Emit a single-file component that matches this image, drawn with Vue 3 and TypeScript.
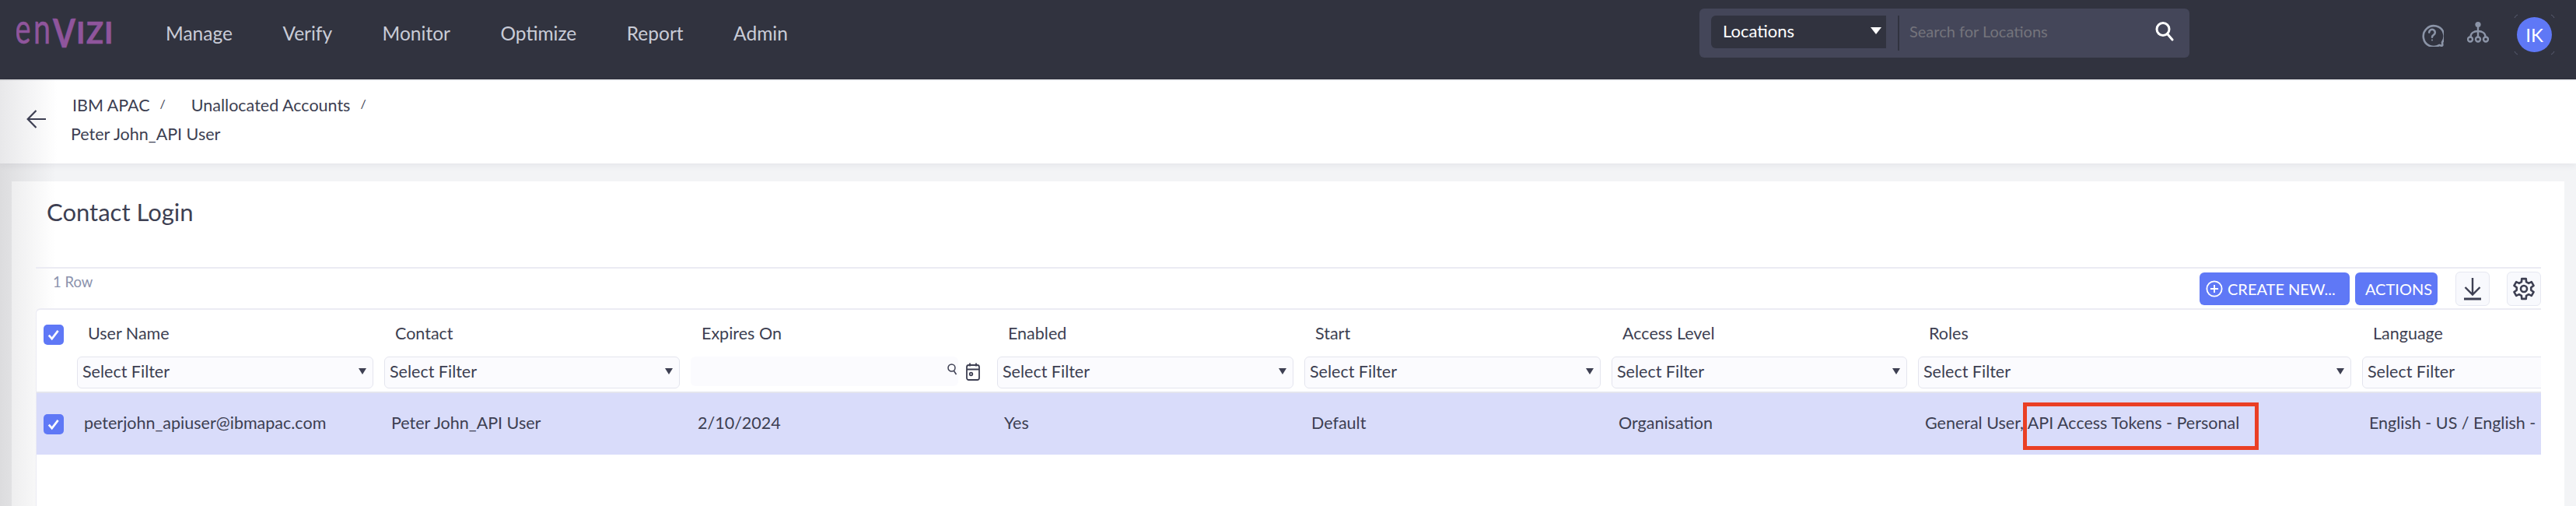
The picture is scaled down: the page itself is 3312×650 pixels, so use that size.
<script setup lang="ts">
const navItems = ['Manage', 'Verify', 'Monitor', 'Optimize', 'Report', 'Admin'];

interface Column {
  label: string;
  value: string;
  filter: 'select' | 'date';
}

const columns: Column[] = [
  { label: 'User Name', value: 'peterjohn_apiuser@ibmapac.com', filter: 'select' },
  { label: 'Contact', value: 'Peter John_API User', filter: 'select' },
  { label: 'Expires On', value: '2/10/2024', filter: 'date' },
  { label: 'Enabled', value: 'Yes', filter: 'select' },
  { label: 'Start', value: 'Default', filter: 'select' },
  { label: 'Access Level', value: 'Organisation', filter: 'select' },
  { label: 'Roles', value: 'General User, API Access Tokens - Personal', filter: 'select' },
  { label: 'Language', value: 'English - US / English - US', filter: 'select' },
];

// six lobed cog outline
function gearPoints(): string {
  const pts: string[] = [];
  const steps = [
    [13.2, -12], [13.2, 12], [9.4, 19], [9.4, 41],
  ];
  for (let i = 0; i < 6; i++) {
    for (const [r, a] of steps) {
      const ang = ((i * 60 + a - 90) * Math.PI) / 180;
      pts.push(`${(15 + r * Math.cos(ang)).toFixed(2)},${(15 + r * Math.sin(ang)).toFixed(2)}`);
    }
  }
  return pts.join(' ');
}
const gear = gearPoints();
</script>

<template>
  <div class="page">
    <header class="nav">
      <svg class="logo" width="192" height="86" viewBox="0 0 192 86" fill="#8f559c" stroke="#8f559c" stroke-width=".6">
        <text x="-1.500" y="56" font-size="55" textLength="20" lengthAdjust="spacingAndGlyphs">e</text>
        <text x="22" y="56" font-size="55" textLength="22" lengthAdjust="spacingAndGlyphs">n</text>
        <text x="47" y="61" font-size="52" font-weight="700" textLength="29" lengthAdjust="spacingAndGlyphs">V</text>
        <text x="77" y="56" font-size="39" font-weight="700">I</text>
        <text x="90" y="56" font-size="39" font-weight="700" textLength="22" lengthAdjust="spacingAndGlyphs">Z</text>
        <text x="113" y="56" font-size="39" font-weight="700">I</text>
      </svg>
      <nav class="menu">
        <a v-for="item in navItems" :key="item">{{ item }}</a>
      </nav>
      <div class="search">
        <div class="search-select">
          <span>Locations</span>
          <i class="caret"></i>
        </div>
        <div class="search-input">
          <span>Search for Locations</span>
          <svg width="26" height="26" viewBox="0 0 26 26" fill="none" stroke="#fff" stroke-width="3">
            <circle cx="11" cy="10.5" r="8" />
            <path d="M17 17l6 7" stroke-linecap="round" />
          </svg>
        </div>
      </div>
      <div class="nav-icons">
        <svg class="help" width="30" height="30" viewBox="0 0 30 30" fill="none" stroke="#8b94a7" stroke-width="2.6">
          <path d="M28 24.5a13.4 13.4 0 1 0-3.6 3.4l2.6.8c1 .2 1.6-.5 1.3-1.4z" stroke-linejoin="round" />
          <path d="M11.2 11.6a3.8 3.8 0 1 1 5.7 3.3c-1.2.7-1.9 1.4-1.9 2.8" stroke-linecap="round" />
          <circle cx="15" cy="21.4" r="1" fill="#8b94a7" stroke="none" />
        </svg>
        <svg class="org" width="28" height="28" viewBox="0 0 28 28" fill="none" stroke="#8b94a7" stroke-width="2.4">
          <circle cx="14" cy="4.5" r="3.6" fill="#8b94a7" stroke="none" />
          <path d="M14 6v15M4.5 20.5c0-5 4-7.5 9.5-7.5s9.5 2.5 9.5 7.5" />
          <circle cx="4" cy="23.5" r="3" />
          <circle cx="14" cy="23.5" r="3" />
          <circle cx="24" cy="23.5" r="3" />
        </svg>
        <div class="avatar">
          IK
          <svg class="avatar-ring" width="53" height="53" viewBox="0 0 53 53" fill="none" stroke="#5a5d70" stroke-width="1">
            <path d="M1 5a7 7 0 0 1 4-4M48 1a7 7 0 0 1 4 4M52 48a7 7 0 0 1-4 4M5 52a7 7 0 0 1-4-4" />
          </svg>
        </div>
      </div>
    </header>

    <section class="crumbs">
      <svg class="back" width="26" height="26" viewBox="0 0 26 26" fill="none" stroke="#3d3f52" stroke-width="2.2">
        <path d="M25 13H2M12.5 2L1.7 13l10.8 11" />
      </svg>
      <div class="crumb-text">
        <div class="crumb-links">
          <span>IBM APAC</span><em>/</em>
          <span class="second">Unallocated Accounts</span><em>/</em>
        </div>
        <div class="crumb-current">Peter John_API User</div>
      </div>
    </section>

    <main class="card">
      <h1>Contact Login</h1>
      <div class="table">
        <div class="toolbar">
          <span class="count">1 Row</span>
          <button class="btn create">
            <svg width="22" height="22" viewBox="0 0 24 24" fill="none" stroke="#fff" stroke-width="2">
              <circle cx="12" cy="12" r="10.5" />
              <path d="M12 6.5v11M6.5 12h11" />
            </svg>
            CREATE NEW...
          </button>
          <button class="btn actions">ACTIONS</button>
          <button class="tool first">
            <svg width="24" height="30" viewBox="0 0 24 30" fill="none" stroke="#3d3f52" stroke-width="2.4">
              <path d="M12 1v21M2.5 13l9.500 9.500L21.500 13" />
              <path d="M1 28h22" stroke-width="3" />
            </svg>
          </button>
          <button class="tool">
            <svg width="30" height="30" viewBox="0 0 30 30" fill="none" stroke="#3d3f52" stroke-width="2.6" stroke-linejoin="round">
              <polygon :points="gear" />
              <circle cx="15" cy="15" r="4" />
            </svg>
          </button>
        </div>

        <div class="body">
          <div class="grid head">
            <div class="check-cell"><span class="check"><svg width="18" height="18" viewBox="0 0 16 16" fill="none" stroke="#fff" stroke-width="2.4"><path d="M2.5 8.5l3.500 4 7-9" /></svg></span></div>
            <div v-for="col in columns" :key="col.label" class="label">{{ col.label }}</div>
          </div>
          <div class="grid filters">
            <div></div>
            <div v-for="col in columns" :key="col.label" class="filter-cell">
              <div v-if="col.filter === 'select'" class="select">
                <span>Select Filter</span>
                <i class="caret dark"></i>
              </div>
              <div v-else class="date">
                <div class="date-input">
                  <svg width="13" height="15" viewBox="0 0 13 15" fill="none" stroke="#3d3f52" stroke-width="1.5">
                    <circle cx="5.5" cy="5.5" r="4.5" />
                    <path d="M8.5 9.5l3 4.500" />
                  </svg>
                </div>
                <svg class="cal" width="18" height="23" viewBox="0 0 18 23" fill="none" stroke="#3d3f52" stroke-width="1.8">
                  <rect x="1" y="3" width="16" height="19" rx="2.5" />
                  <path d="M1 8.5h16M5 .5v4M13 .5v4" />
                  <circle cx="6.5" cy="14.5" r="1.8" />
                </svg>
              </div>
            </div>
          </div>
          <div class="grid row">
            <div class="check-cell"><span class="check"><svg width="18" height="18" viewBox="0 0 16 16" fill="none" stroke="#fff" stroke-width="2.4"><path d="M2.5 8.5l3.500 4 7-9" /></svg></span></div>
            <div v-for="col in columns" :key="col.label" class="value">{{ col.value }}</div>
            <div class="highlight"></div>
          </div>
        </div>
      </div>
    </main>
  </div>
</template>

<style scoped>
.page {
  width: 3312px;
  height: 650px;
  display: flex;
  flex-direction: column;
  overflow: hidden;
  background: linear-gradient(90deg, #dcdcde 0, #f3f4f6 72px);
  font-family: Lato, "Open Sans", sans-serif;
  font-size: 21.5px;
  color: #3d3f52;
}

.nav {
  height: 102px;
  flex: none;
  display: flex;
  align-items: flex-start;
  background: #31333f;
  padding-left: 21px;
  box-sizing: border-box;
}
.logo {
  flex: none;
  font-family: Lato, sans-serif;
}
.menu {
  display: flex;
  gap: 64.5px;
  height: 86px;
  line-height: 86px;
  font-size: 24.5px;
  color: #c9ccd7;
  width: 1972px;
}

.search {
  margin-top: 11px;
  width: 630px;
  height: 63px;
  background: #444659;
  border-radius: 6px;
  display: flex;
  box-sizing: border-box;
  padding: 9px 0 0 15px;
}
.search-select {
  width: 225px;
  height: 42px;
  border-radius: 6px 0 0 6px;
  background: #31333f;
  color: #fff;
  display: flex;
  align-items: center;
  justify-content: space-between;
  padding: 0 6px 3px 15px;
  box-sizing: border-box;
  font-size: 22px;
}
.search-input {
  margin-left: 15px;
  border-left: 2px solid #31333f;
  height: 45px;
  width: 375px;
  box-sizing: border-box;
  padding: 0 19px 6px 13px;
  display: flex;
  align-items: center;
  justify-content: space-between;
  font-size: 20px;
  color: #74747c;
}
.caret {
  width: 0;
  height: 0;
  border-left: 7px solid transparent;
  border-right: 7px solid transparent;
  border-top: 9px solid #fff;
}
.caret.dark {
  border-left-width: 5.5px;
  border-right-width: 5.5px;
  border-top: 8px solid #3d3f52;
}

.nav-icons {
  display: flex;
  align-items: flex-start;
  margin-left: 297px;
}
.help {
  margin-top: 30px;
}
.org {
  margin: 27px 0 0 30px;
}
.avatar {
  position: relative;
  margin: 22px 0 0 36px;
  width: 45px;
  height: 45px;
  border-radius: 50%;
  background: #5f78f6;
  color: #fff;
  font-size: 24px;
  line-height: 45px;
  text-align: center;
}
.avatar-ring {
  position: absolute;
  left: -4px;
  top: -4px;
}

.crumbs {
  margin-top: 2px;
  height: 106px;
  flex: none;
  display: flex;
  align-items: center;
  box-sizing: border-box;
  padding: 0 0 9px 34px;
  background: linear-gradient(90deg, #e8e8ea 0, #fff 74px);
  box-shadow: 0 3px 8px rgba(60, 60, 80, 0.07);
}
.crumb-text {
  margin: 2px 0 0 31px;
  line-height: 36px;
}
.crumb-links {
  display: flex;
  padding-left: 2px;
}
.crumb-links em {
  font-style: normal;
  font-size: 16px;
  margin: -2px 0 0 13px;
}
.second {
  margin-left: 33px;
}
.crumb-current {
  margin-top: 1px;
}

.card {
  flex: 1;
  margin: 23px 15px 0;
  background: linear-gradient(90deg, #eeeeef 0, #fff 56px);
  padding-left: 31px;
  padding-right: 30px;
  min-height: 0;
  box-sizing: border-box;
}
h1 {
  margin: 0 0 0 14px;
  height: 110px;
  padding-top: 19px;
  box-sizing: border-box;
  font-size: 31px;
  line-height: 40px;
  font-weight: 400;
}

.table {
  height: 307px;
  overflow: hidden;
}
.toolbar {
  height: 53px;
  border-top: 2px solid #ebebf3;
  box-sizing: border-box;
  display: flex;
  align-items: flex-start;
  padding-left: 22px;
}
.count {
  font-size: 18.5px;
  line-height: 34px;
  color: #8b93ad;
  margin-right: auto;
}
.btn {
  margin-top: 5px;
  height: 42px;
  border: 0;
  border-radius: 6px;
  background: #5f78f6;
  color: #fff;
  font: inherit;
  font-size: 20px;
  display: flex;
  align-items: center;
  padding: 0;
}
.create {
  width: 193px;
  gap: 6px;
  padding-left: 8px;
}
.actions {
  width: 106px;
  margin-left: 7px;
  justify-content: center;
  padding-left: 6px;
}
.tool {
  margin-top: 4px;
  margin-left: 22px;
  width: 44px;
  height: 44px;
  padding: 0;
  display: flex;
  align-items: center;
  justify-content: center;
  background: #f8f9fd;
  border: 1px solid #e6e8f1;
  border-radius: 6px;
}
.tool.first {
  margin-left: 23px;
}

.body {
  height: 252px;
  background: #fff;
  border-top: 2px solid #ebebf3;
  border-left: 1px solid #ebebf3;
  border-top-left-radius: 6px;
  overflow: hidden;
}
.grid {
  display: grid;
  grid-template-columns: 45px 395px 394px 394px 395px 395px 394px 571px 395px;
}
.head {
  height: 58px;
  align-items: center;
  padding-top: 6px;
  box-sizing: border-box;
}
.label {
  padding: 0 0 5px 21px;
}
.check-cell {
  padding-left: 9px;
  display: flex;
}
.check {
  width: 26px;
  height: 26px;
  border-radius: 5px;
  background: #5f78f6;
  display: flex;
  align-items: center;
  justify-content: center;
}
.filters {
  height: 47px;
  border-bottom: 2px solid #e4e5ee;
}
.filter-cell {
  padding: 2px 7px 0;
}
.select {
  height: 41px;
  border: 1px solid #e4e5ee;
  border-radius: 6px;
  background: #fbfbfe;
  display: flex;
  align-items: center;
  justify-content: space-between;
  padding: 0 8px 3px 6px;
  box-sizing: border-box;
}
.date {
  display: flex;
  align-items: flex-start;
}
.date-input {
  width: 344px;
  height: 38px;
  background: #fbfbfe;
  border-radius: 6px;
  display: flex;
  justify-content: flex-end;
  padding: 9px 1px 0 0;
  box-sizing: border-box;
}
.cal {
  margin: 8px 0 0 10px;
  flex: none;
}
.row {
  position: relative;
  height: 79px;
  background: #d9dcfa;
  align-items: center;
}
.value {
  padding: 0 0 3px 16px;
  white-space: nowrap;
  overflow: hidden;
}
.highlight {
  position: absolute;
  left: 2554px;
  top: 12px;
  width: 303px;
  height: 61px;
  box-sizing: border-box;
  border: 5px solid #ea3f24;
}
</style>

<style>
body {
  margin: 0;
}
</style>
